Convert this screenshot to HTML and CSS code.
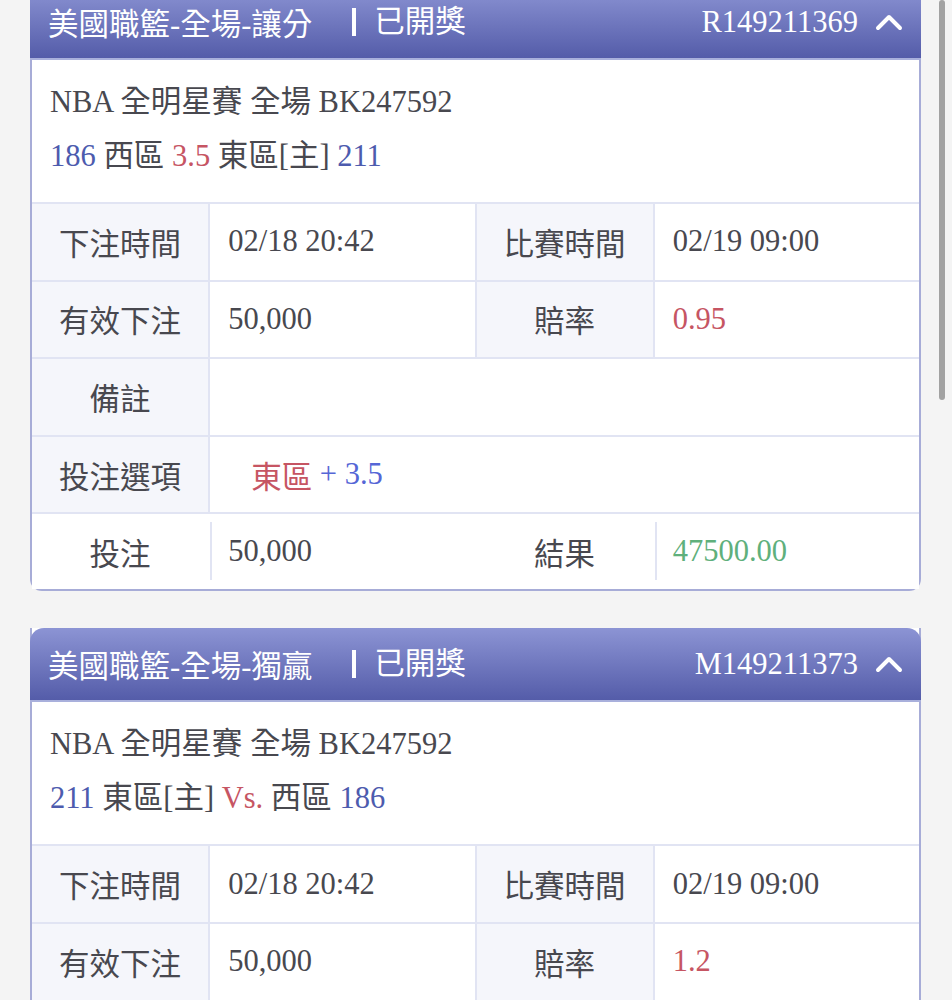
FILE: index.html
```html
<!DOCTYPE html>
<html lang="zh-Hant">
<head>
    <meta charset="UTF-8">
    <meta name="viewport" content="width=device-width, initial-scale=1.0">
    <title>注單紀錄</title>
    <link rel="stylesheet" href="styles.css">
</head>
<body>

    <div class="scrollbar"></div>

    <div class="list">

        <div class="card">
            <div class="card-head">
                <div class="head-left">
                    <span class="title">美國職籃-全場-讓分</span>
                    <span class="status">已開獎</span>
                </div>
                <div class="head-right">
                    <span class="ticket">R149211369</span>
                    <svg class="chevron" width="28" height="18" viewBox="0 0 28 18"><polyline points="3,15 14,4 25,15" fill="none" stroke="#fff" stroke-width="4" stroke-linecap="round" stroke-linejoin="round"/></svg>
                </div>
            </div>
            <div class="match">
                <p>NBA 全明星賽 全場 BK247592</p>
                <p><span class="blue">186</span> 西區 <span class="red">3.5</span> 東區[主] <span class="blue">211</span></p>
            </div>
            <div class="details">
                <div class="label">下注時間</div>
                <div class="value">02/18 20:42</div>
                <div class="label">比賽時間</div>
                <div class="value">02/19 09:00</div>

                <div class="label">有效下注</div>
                <div class="value">50,000</div>
                <div class="label">賠率</div>
                <div class="value red">0.95</div>

                <div class="label">備註</div>
                <div class="value wide"></div>

                <div class="label">投注選項</div>
                <div class="value wide pick"><span class="red">東區</span>&nbsp;<span class="bright">+ 3.5</span></div>
            </div>
            <div class="totals">
                <div class="label">投注</div>
                <div class="value"><span>50,000</span></div>
                <div class="label">結果</div>
                <div class="value"><span class="green">47500.00</span></div>
            </div>
        </div>

        <div class="card">
            <div class="card-head">
                <div class="head-left">
                    <span class="title">美國職籃-全場-獨贏</span>
                    <span class="status">已開獎</span>
                </div>
                <div class="head-right">
                    <span class="ticket">M149211373</span>
                    <svg class="chevron" width="28" height="18" viewBox="0 0 28 18"><polyline points="3,15 14,4 25,15" fill="none" stroke="#fff" stroke-width="4" stroke-linecap="round" stroke-linejoin="round"/></svg>
                </div>
            </div>
            <div class="match">
                <p>NBA 全明星賽 全場 BK247592</p>
                <p><span class="blue">211</span> 東區[主] <span class="red">Vs.</span> 西區 <span class="blue">186</span></p>
            </div>
            <div class="details">
                <div class="label">下注時間</div>
                <div class="value">02/18 20:42</div>
                <div class="label">比賽時間</div>
                <div class="value">02/19 09:00</div>

                <div class="label">有效下注</div>
                <div class="value">50,000</div>
                <div class="label">賠率</div>
                <div class="value red">1.2</div>

                <div class="label">備註</div>
                <div class="value wide"></div>

                <div class="label">投注選項</div>
                <div class="value wide pick"><span class="red">東區</span></div>
            </div>
            <div class="totals">
                <div class="label">投注</div>
                <div class="value"><span>50,000</span></div>
                <div class="label">結果</div>
                <div class="value"><span class="green">60000.00</span></div>
            </div>
        </div>

    </div>

</body>
</html>
```

FILE: styles.css
```css
body {
    margin: 0;
    background-color: #f4f4f4;
    font-family: "Liberation Serif", "Noto Sans CJK TC", serif;
    font-size: 30.5px;
    color: #48484f;
}
.list {
    margin-top: -14px;
    padding: 0 31px 40px 30px;
}
.card {
    margin-bottom: 37px;
    background-color: #fff;
    border: 2px solid #a7acd7;
    border-top: none;
    border-radius: 0 0 12px 12px;
}
.card-head {
    height: 72px;
    margin: 0 -2px;
    padding: 0 18px;
    display: flex;
    align-items: center;
    justify-content: space-between;
    background: linear-gradient(to bottom, #8c94d4, #545ca9);
    border-bottom: 2px solid #a9b0dc;
    border-radius: 14px 14px 0 0;
    color: #fff;
}
.head-left {
    display: flex;
    align-items: center;
}
.status {
    margin-left: 40px;
    padding-left: 18px;
    border-left: 4px solid #fff;
    line-height: 28px;
}
.head-right {
    display: flex;
    align-items: center;
    gap: 17px;
}
.match {
    padding: 15px 18px 19px;
}
.match p {
    margin: 0;
    line-height: 54px;
}
.details, .totals {
    display: grid;
    grid-template-columns: 2fr 3fr 2fr 3fr;
    column-gap: 2px;
}
.details {
    grid-auto-rows: 75.6px;
    row-gap: 2px;
    background-color: #e1e4f3;
    border-top: 2px solid #e1e4f3;
    border-bottom: 2px solid #e1e4f3;
}
.totals {
    height: 75px;
}
.label {
    display: flex;
    align-items: center;
    justify-content: center;
    background-color: #f5f6fb;
}
.value {
    display: flex;
    align-items: center;
    padding-left: 18px;
    background-color: #fff;
}
.wide {
    grid-column: span 3;
}
.pick {
    padding-left: 41px;
}
.totals .label {
    background-color: #fff;
}
.totals .value {
    padding: 8px 0 9px;
}
.totals .value span {
    height: 100%;
    display: flex;
    align-items: center;
    padding-left: 16px;
    border-left: 2px solid #e1e4f3;
}
.blue { color: #4d5bae; }
.red { color: #c65563; }
.bright { color: #5566d6; }
.green { color: #5fb07c; }
.scrollbar {
    position: fixed;
    top: 0;
    right: 7px;
    width: 6px;
    height: 400px;
    border-radius: 3px;
    background-color: #a2a2a2;
    z-index: 10;
}
```
